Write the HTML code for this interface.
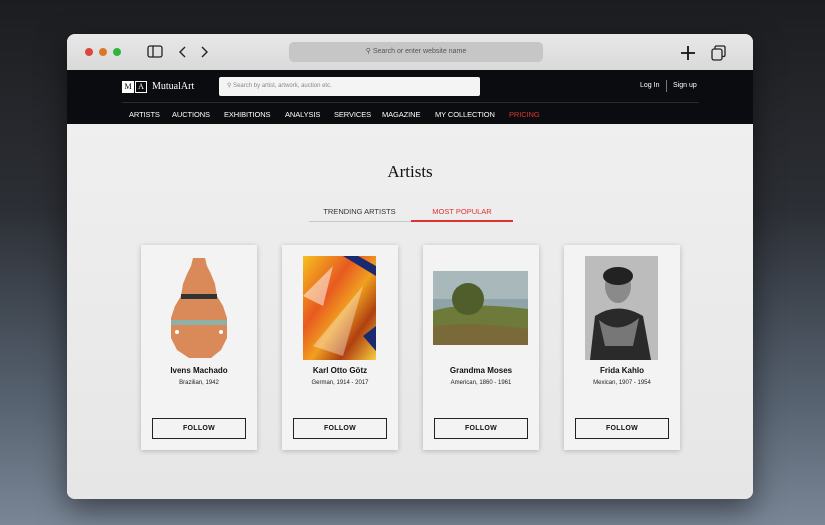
<!DOCTYPE html><html><head><style>
*{margin:0;padding:0;box-sizing:border-box}
body{width:825px;height:525px;overflow:hidden;background:linear-gradient(180deg,#1c1d20 0%,#2c2f35 40%,#55606e 75%,#7a8696 100%);font-family:"Liberation Sans",sans-serif;position:relative}
.win{position:absolute;left:67px;top:34px;width:686px;height:465px;border-radius:8px;overflow:hidden;background:#ececec;box-shadow:0 10px 30px rgba(0,0,0,.5)}
.tb{position:absolute;left:0;top:0;width:686px;height:36px;background:linear-gradient(#e8e8e8,#d9d9d9)}
.dot{position:absolute;top:14px;width:8px;height:8px;border-radius:50%}
.url{position:absolute;left:222px;top:8px;width:254px;height:20px;border-radius:5px;background:#c6c6c6;font-size:7px;color:#555;text-align:center;line-height:20px}
.hd{position:absolute;left:0;top:36px;width:686px;height:54px;background:#0b0c10}
.nav{position:absolute;top:40px;font-size:7.5px;color:#fff;letter-spacing:-.1px}
.main{position:absolute;left:0;top:90px;width:686px;height:375px;background:linear-gradient(#efefef,#e6e6e6)}
.card{position:absolute;top:121px;width:116px;height:205px;background:#f3f3f3;box-shadow:0 1px 5px rgba(0,0,0,.22)}
.nm{position:absolute;top:121px;width:100%;text-align:center;font-size:8px;font-weight:bold;color:#111}
.sb{position:absolute;top:135px;width:100%;text-align:center;font-size:6px;color:#222}
.fb{position:absolute;left:11px;top:173px;width:94px;height:21px;border:1.5px solid #222;font-size:7px;font-weight:bold;text-align:center;line-height:20px;color:#111;letter-spacing:.3px}
.img{position:absolute}
</style></head><body>
<div class="win">
<div class="tb">
<div class="dot" style="left:18px;background:#e0443e"></div>
<div class="dot" style="left:32px;background:#d9772a"></div>
<div class="dot" style="left:46px;background:#2fb53c"></div>
<svg style="position:absolute;left:80px;top:11px" width="16" height="14"><rect x="1" y="1" width="14" height="11" rx="2" fill="none" stroke="#222" stroke-width="1.3"/><line x1="6" y1="1" x2="6" y2="12" stroke="#222" stroke-width="1.3"/></svg>
<svg style="position:absolute;left:110px;top:11px" width="40" height="14"><path d="M8 2L3 7L8 12M25 2L30 7L25 12" fill="none" stroke="#222" stroke-width="1.4"/></svg>
<div class="url">&#9906; Search or enter website name</div>
<svg style="position:absolute;left:614px;top:12px" width="14" height="14"><path d="M7 0V14M0 7H14" stroke="#111" stroke-width="1.8"/></svg>
<svg style="position:absolute;left:644px;top:11px" width="16" height="16"><rect x="1" y="4" width="10" height="11" rx="2" fill="none" stroke="#222" stroke-width="1.3"/><path d="M4 4V2.5Q4 1 5.5 1H12.5Q14 1 14 2.5V10Q14 11.5 12.5 11.5H11" fill="none" stroke="#222" stroke-width="1.3"/></svg>
</div>
<div class="hd">
<div style="position:absolute;left:55px;top:11px;width:12px;height:12px;background:#fff;font:8px 'Liberation Serif',serif;color:#000;text-align:center;line-height:12px">M</div>
<div style="position:absolute;left:68px;top:11px;width:12px;height:12px;border:1px solid #fff;font:8px 'Liberation Serif',serif;color:#fff;text-align:center;line-height:10px">A</div>
<div style="position:absolute;left:85px;top:11px;font:10px 'Liberation Serif',serif;color:#fff">MutualArt</div>
<div style="position:absolute;left:152px;top:7px;width:261px;height:19px;background:#f4f4f4;border-radius:2px;font-size:6px;color:#888;line-height:19px;padding-left:8px">&#9906; Search by artist, artwork, auction etc.</div>
<div style="position:absolute;left:573px;top:12px;font-size:7px;color:#fff">Log In</div>
<div style="position:absolute;left:599px;top:10px;width:1px;height:12px;background:#777"></div>
<div style="position:absolute;left:606px;top:12px;font-size:7px;color:#fff">Sign up</div>
<div style="position:absolute;left:55px;top:32px;width:577px;height:1px;background:#2a2b30"></div>
<div class="nav" style="left:62px">ARTISTS</div>
<div class="nav" style="left:105px">AUCTIONS</div>
<div class="nav" style="left:157px">EXHIBITIONS</div>
<div class="nav" style="left:218px">ANALYSIS</div>
<div class="nav" style="left:267px">SERVICES</div>
<div class="nav" style="left:315px">MAGAZINE</div>
<div class="nav" style="left:368px">MY COLLECTION</div>
<div class="nav" style="left:442px;color:#d33">PRICING</div>
</div>
<div class="main">
<div style="position:absolute;left:0;width:686px;top:38px;text-align:center;font:17px 'Liberation Serif',serif;color:#111">Artists</div>
<div style="position:absolute;left:242px;top:83px;width:101px;text-align:center;font-size:7.5px;color:#333">TRENDING ARTISTS</div>
<div style="position:absolute;left:242px;top:97px;width:102px;height:1px;background:#c8c8c8"></div>
<div style="position:absolute;left:344px;top:83px;width:102px;text-align:center;font-size:7.5px;color:#d33">MOST POPULAR</div>
<div style="position:absolute;left:344px;top:96px;width:102px;height:2px;background:#d33"></div>

<div class="card" style="left:74px">
<svg class="img" style="left:24px;top:11px" width="68" height="104"><path d="M28 2H40L42 10L46 18L50 28L52 40L58 50L62 62L62 82L56 94L46 102H24L12 94L6 82L6 62L10 50L16 40L18 28L22 18L26 10Z" fill="#d98a58"/><rect x="16" y="38" width="36" height="5" fill="#333"/><rect x="6" y="64" width="56" height="5" fill="#8fb0a8"/><circle cx="12" cy="76" r="2" fill="#fff"/><circle cx="56" cy="76" r="2" fill="#fff"/></svg>
<div class="nm">Ivens Machado</div><div class="sb">Brazilian, 1942</div><div class="fb">FOLLOW</div></div>

<div class="card" style="left:215px">
<svg class="img" style="left:21px;top:11px" width="73" height="104"><defs><linearGradient id="g1" x1="0" y1="0" x2="1" y2="1"><stop offset="0" stop-color="#f5c020"/><stop offset=".35" stop-color="#e85a20"/><stop offset=".55" stop-color="#f0a020"/><stop offset=".75" stop-color="#b04010"/><stop offset="1" stop-color="#f7d040"/></linearGradient></defs><rect width="73" height="104" fill="url(#g1)"/><path d="M40 0L73 20V10L55 0Z" fill="#1a2a70"/><path d="M60 80L73 70V95Z" fill="#1a2a70"/><path d="M0 40L30 10L20 50Z" fill="#fff" opacity=".5"/><path d="M10 90L60 30L40 100Z" fill="#fff" opacity=".35"/></svg>
<div class="nm">Karl Otto Götz</div><div class="sb">German, 1914 - 2017</div><div class="fb">FOLLOW</div></div>

<div class="card" style="left:356px">
<svg class="img" style="left:10px;top:26px" width="95" height="74"><rect width="95" height="74" fill="#8fa4a8"/><rect y="0" width="95" height="28" fill="#a9b8bb"/><path d="M0 40Q30 30 95 38V74H0Z" fill="#6e7a3a"/><circle cx="35" cy="28" r="16" fill="#4f5e2a"/><path d="M0 55Q40 50 95 58V74H0Z" fill="#7a6a3a"/></svg>
<div class="nm">Grandma Moses</div><div class="sb">American, 1860 - 1961</div><div class="fb">FOLLOW</div></div>

<div class="card" style="left:497px">
<svg class="img" style="left:21px;top:11px" width="73" height="104"><rect x="0" y="0" width="73" height="104" fill="#bcbcbc"/><ellipse cx="33" cy="30" rx="13" ry="17" fill="#8a8a8a"/><ellipse cx="33" cy="20" rx="15" ry="9" fill="#222"/><path d="M5 104L10 60Q33 45 58 60L66 104Z" fill="#2a2a2a"/><path d="M14 64Q33 80 54 62L48 90H20Z" fill="#777"/></svg>
<div class="nm">Frida Kahlo</div><div class="sb">Mexican, 1907 - 1954</div><div class="fb">FOLLOW</div></div>
</div>
</div>
</body></html>
